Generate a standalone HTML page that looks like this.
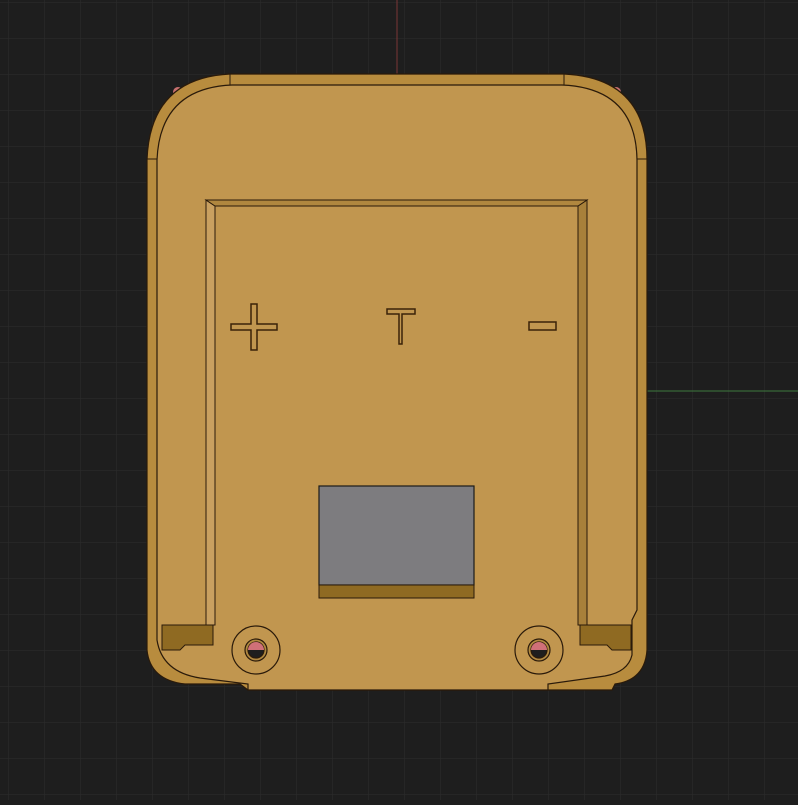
<!DOCTYPE html>
<html><head><style>html,body{margin:0;padding:0;background:#1e1e1e;overflow:hidden}</style></head>
<body>
<svg width="798" height="800" viewBox="0 0 798 800" xmlns="http://www.w3.org/2000/svg">
<defs>
<pattern id="g" x="8" y="2" width="36" height="36" patternUnits="userSpaceOnUse">
<path d="M0 0H36M0 0V36" stroke="#2b2b2b" stroke-width="1.2" fill="none"/>
</pattern>
</defs>
<rect width="798" height="800" fill="#1e1e1e"/>
<rect width="798" height="800" fill="url(#g)"/>
<line x1="397" y1="0" x2="397" y2="74" stroke="#7a3535" stroke-width="1"/>
<line x1="647" y1="391" x2="798" y2="391" stroke="#3d7a3d" stroke-width="1"/>
<circle cx="178" cy="92" r="5" fill="#c77070"/>
<circle cx="616" cy="92" r="5" fill="#c77070"/>
<!-- outer body -->
<path d="M230 74 H564 Q647 78 647 160 V650 Q645 680 615 684 L612 690 H548 L248 690 L240 684 H185 Q150 680 147 650 V160 Q150 78 230 74 Z" fill="#b88c3e" stroke="#2a1a0a" stroke-width="1.2"/>
<!-- inner face -->
<path d="M232 85 H562 Q636 88 637 160 V610 L632 620 V655 Q628 672 605 676 L548 684 L548 690 L248 690 L248 684 L200 678 Q162 672 157 640 V160 Q160 88 232 85 Z" fill="#c1964f" stroke="#2a1a0a" stroke-width="1.2"/>
<line x1="230" y1="74" x2="230" y2="85" stroke="#2a1a0a"/>
<line x1="564" y1="74" x2="564" y2="85" stroke="#2a1a0a"/>
<line x1="147" y1="159" x2="157" y2="159" stroke="#2a1a0a"/>
<line x1="637" y1="159" x2="647" y2="159" stroke="#2a1a0a"/>
<!-- recess walls -->
<path d="M206 200 L215 206 V625 H206 Z" fill="#c9a060" stroke="#2a1a0a" stroke-width="1"/>
<path d="M587 200 L578 206 V625 H587 Z" fill="#a8803a" stroke="#2a1a0a" stroke-width="1"/>
<path d="M206 200 H587 L578 206 H215 Z" fill="#b0873f" stroke="#2a1a0a" stroke-width="1"/>
<!-- bottom notches -->
<path d="M162 625 H213 V645 H185 L180 650 H162 Z" fill="#8f6a22" stroke="#2a1a0a" stroke-width="1"/>
<path d="M580 625 H631 V650 H612 L607 645 H580 Z" fill="#8f6a22" stroke="#2a1a0a" stroke-width="1"/>
<!-- symbols -->
<path d="M251 304 H257 V324 H277 V330 H257 V350 H251 V330 H231 V324 H251 Z" fill="none" stroke="#3a2208" stroke-width="1.5"/>
<path d="M387 309 H415 V314 H402 V344 H399 V314 H387 Z" fill="none" stroke="#3a2208" stroke-width="1.5"/>
<rect x="529" y="322" width="27" height="8" fill="none" stroke="#3a2208" stroke-width="1.5"/>
<!-- gray window -->
<rect x="319" y="486" width="155" height="99" fill="#7d7c7f" stroke="#1a1a1a" stroke-width="1.2"/>
<rect x="319" y="585" width="155" height="13" fill="#8f6a22" stroke="#2a1a0a" stroke-width="1"/>
<!-- screws -->
<g stroke="#2a1a0a" stroke-width="1.2">
<circle cx="256" cy="650" r="24" fill="#c1964f"/>
<circle cx="256" cy="650" r="11" fill="#b08840"/>
<circle cx="256" cy="650" r="8" fill="#1e1e1e"/>
<path d="M248 650 A8 8 0 0 1 264 650 Z" fill="#d07078" stroke="none"/>
<circle cx="539" cy="650" r="24" fill="#c1964f"/>
<circle cx="539" cy="650" r="11" fill="#b08840"/>
<circle cx="539" cy="650" r="8" fill="#1e1e1e"/>
<path d="M531 650 A8 8 0 0 1 547 650 Z" fill="#d07078" stroke="none"/>
</g>
</svg>
</body></html>
